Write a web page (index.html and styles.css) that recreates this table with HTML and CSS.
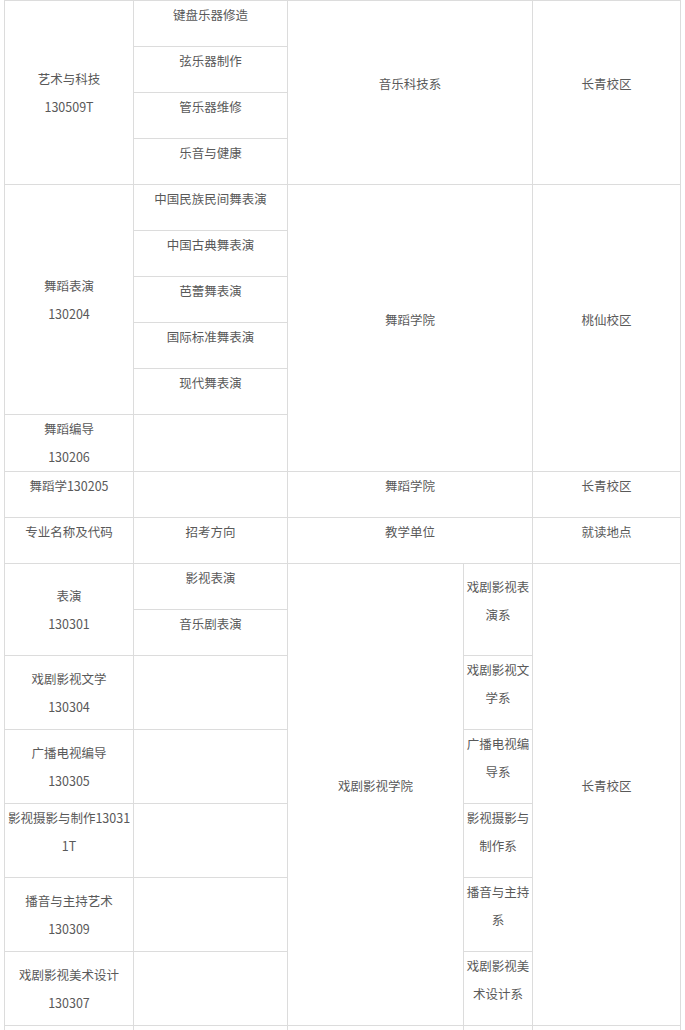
FILE: index.html
```html
<!DOCTYPE html>
<html lang="zh-CN">
<head>
<meta charset="utf-8">
<title>专业设置</title>
<link rel="stylesheet" href="styles.css">
</head>
<body>
<div class="wrap">
<table class="majors">
  <colgroup>
    <col class="c1"><col class="c2"><col class="c3"><col class="c4"><col class="c5">
  </colgroup>
  <tbody>
    <tr class="r46">
      <td rowspan="4">艺术与科技<br>130509T</td>
      <td class="tr">键盘乐器修造</td>
      <td class="tr" colspan="2" rowspan="4">音乐科技系</td>
      <td class="tr" rowspan="4">长青校区</td>
    </tr>
    <tr class="r46"><td class="tr">弦乐器制作</td></tr>
    <tr class="r46"><td class="tr">管乐器维修</td></tr>
    <tr class="r46"><td class="tr">乐音与健康</td></tr>

    <tr class="r46">
      <td rowspan="5">舞蹈表演<br>130204</td>
      <td class="tr">中国民族民间舞表演</td>
      <td class="tr" colspan="2" rowspan="6">舞蹈学院</td>
      <td class="tr" rowspan="6">桃仙校区</td>
    </tr>
    <tr class="r46"><td class="tr">中国古典舞表演</td></tr>
    <tr class="r46"><td class="tr">芭蕾舞表演</td></tr>
    <tr class="r46"><td class="tr">国际标准舞表演</td></tr>
    <tr class="r46"><td class="tr">现代舞表演</td></tr>
    <tr class="r57">
      <td>舞蹈编导<br>130206</td>
      <td></td>
    </tr>

    <tr class="r46">
      <td class="tr">舞蹈学130205</td>
      <td></td>
      <td class="tr" colspan="2">舞蹈学院</td>
      <td class="tr">长青校区</td>
    </tr>

    <tr class="r46">
      <td class="tr">专业名称及代码</td>
      <td class="tr">招考方向</td>
      <td class="tr" colspan="2">教学单位</td>
      <td class="tr">就读地点</td>
    </tr>

    <tr class="r46">
      <td rowspan="2">表演<br>130301</td>
      <td class="tr">影视表演</td>
      <td class="tr" rowspan="7">戏剧影视学院</td>
      <td class="tr" rowspan="2">戏剧影视表演系</td>
      <td class="tr" rowspan="7">长青校区</td>
    </tr>
    <tr class="r46"><td class="tr">音乐剧表演</td></tr>
    <tr class="r74">
      <td>戏剧影视文学<br>130304</td>
      <td></td>
      <td class="tr">戏剧影视文学系</td>
    </tr>
    <tr class="r74">
      <td>广播电视编导<br>130305</td>
      <td></td>
      <td class="tr">广播电视编导系</td>
    </tr>
    <tr class="r74">
      <td class="tr">影视摄影与制作130311T</td>
      <td></td>
      <td class="tr">影视摄影与制作系</td>
    </tr>
    <tr class="r74">
      <td>播音与主持艺术<br>130309</td>
      <td></td>
      <td class="tr">播音与主持系</td>
    </tr>
    <tr class="r74">
      <td>戏剧影视美术设计<br>130307</td>
      <td></td>
      <td class="tr">戏剧影视美术设计系</td>
    </tr>
    <tr class="r46">
      <td></td><td></td><td></td><td></td><td></td>
    </tr>
  </tbody>
</table>
</div>
</body>
</html>
```

FILE: styles.css
```css
html, body {
  margin: 0;
  padding: 0;
  background: #ffffff;
}

.wrap {
  padding: 0 4px;
}

.majors {
  border-collapse: collapse;
  table-layout: fixed;
  width: 677px;
  font-family: "Noto Sans CJK SC", "Microsoft YaHei", sans-serif;
  font-size: 12.5px;
  line-height: 28px;
  color: #595959;
}

.c1 { width: 129px; }
.c2 { width: 154px; }
.c3 { width: 176px; }
.c4 { width: 69px; }
.c5 { width: 148px; }

.majors td {
  border: 1px solid #dcdcdc;
  padding: 0 2px;
  text-align: center;
  vertical-align: middle;
  word-break: break-all;
}

.majors td.tr {
  padding-top: 0;
  padding-bottom: 17px;
}

.r46 { height: 46px; }
.r57 { height: 57px; }
.r74 { height: 74px; }
```
